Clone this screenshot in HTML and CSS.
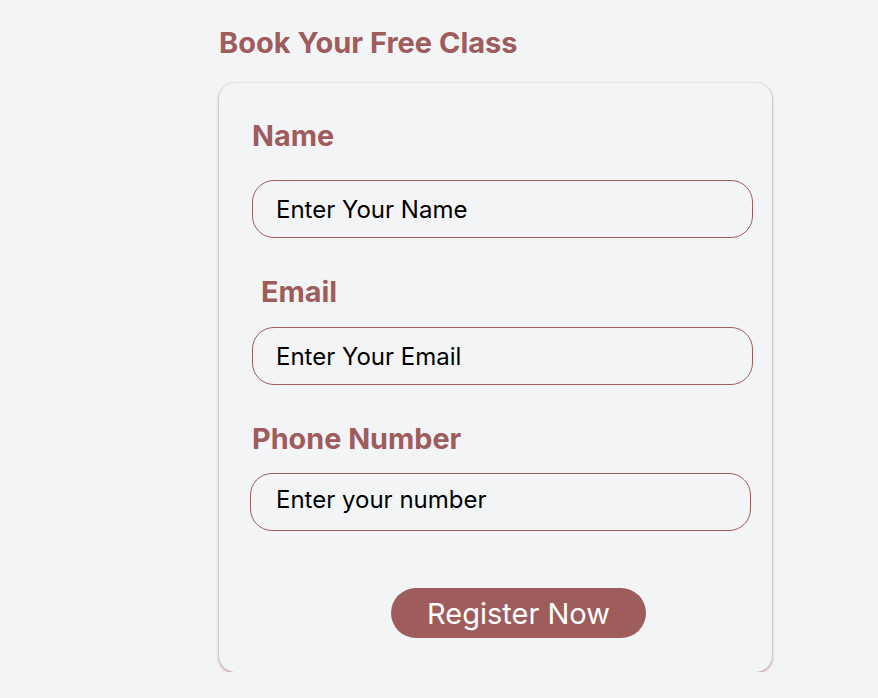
FILE: index.html
```html
<!DOCTYPE html>
<html lang="en">
<head>
<meta charset="utf-8">
<title>Book Your Free Class</title>
<link rel="stylesheet" href="styles.css">
</head>
<body>
<main class="page">
  <h2 class="title">Book Your Free Class</h2>
  <form class="card">
    <label class="label label-name" for="name">Name</label>
    <input class="field field-name" id="name" type="text" placeholder="Enter Your Name">
    <label class="label label-email" for="email">Email</label>
    <input class="field" id="email" type="email" placeholder="Enter Your Email">
    <label class="label label-phone" for="phone">Phone Number</label>
    <input class="field field-phone" id="phone" type="tel" placeholder="Enter your number">
    <button class="btn" type="button">Register Now</button>
  </form>
</main>
</body>
</html>
```

FILE: styles.css
```css
* { box-sizing: border-box; }
html, body { margin: 0; padding: 0; }
body {
  background: #f3f4f6;
  font-family: Inter, "Noto Sans", sans-serif;
  color: #000;
}
.page {
  padding: 25px 0 0 219px;
}
.title {
  margin: 0;
  font-size: 29px;
  line-height: 36px;
  font-weight: 700;
  color: #9e5c5c;
}
.card {
  margin-top: 22px;
  width: 553px;
  height: 589px;
  border-radius: 16px;
  background: #f3f4f6;
  box-shadow: 0 1px 3px rgba(158, 92, 92, 0.8);
  padding: 35px 19px 0 33px;
  display: flex;
  flex-direction: column;
  align-items: flex-start;
}
.label {
  font-size: 28.8px;
  font-weight: 700;
  line-height: 36px;
  color: #9e5c5c;
}
.label-email { margin-left: 9px; margin-top: 36px; }
.label-phone { margin-top: 36px; }
.field {
  margin-top: 17px;
  width: 501px;
  height: 58px;
  border: 1px solid #9e5c5c;
  border-radius: 22px;
  background: #f3f4f6;
  padding: 0 23px;
  font-family: Inter, "Noto Sans", sans-serif;
  font-size: 24px;
  font-weight: 400;
  color: #000;
  outline: none;
}
.field::placeholder { color: #000; opacity: 1; }
.field-name { margin-top: 26px; }
.field-phone { margin-left: -2px; margin-top: 16px; padding: 0 25px 6px; }
.btn {
  margin-top: 57px;
  margin-left: 139px;
  width: 255px;
  height: 50px;
  border: none;
  border-radius: 25px;
  background: #9e5c5c;
  color: #fff;
  font-family: Inter, "Noto Sans", sans-serif;
  font-size: 29px;
  font-weight: 400;
  cursor: pointer;
}
```
